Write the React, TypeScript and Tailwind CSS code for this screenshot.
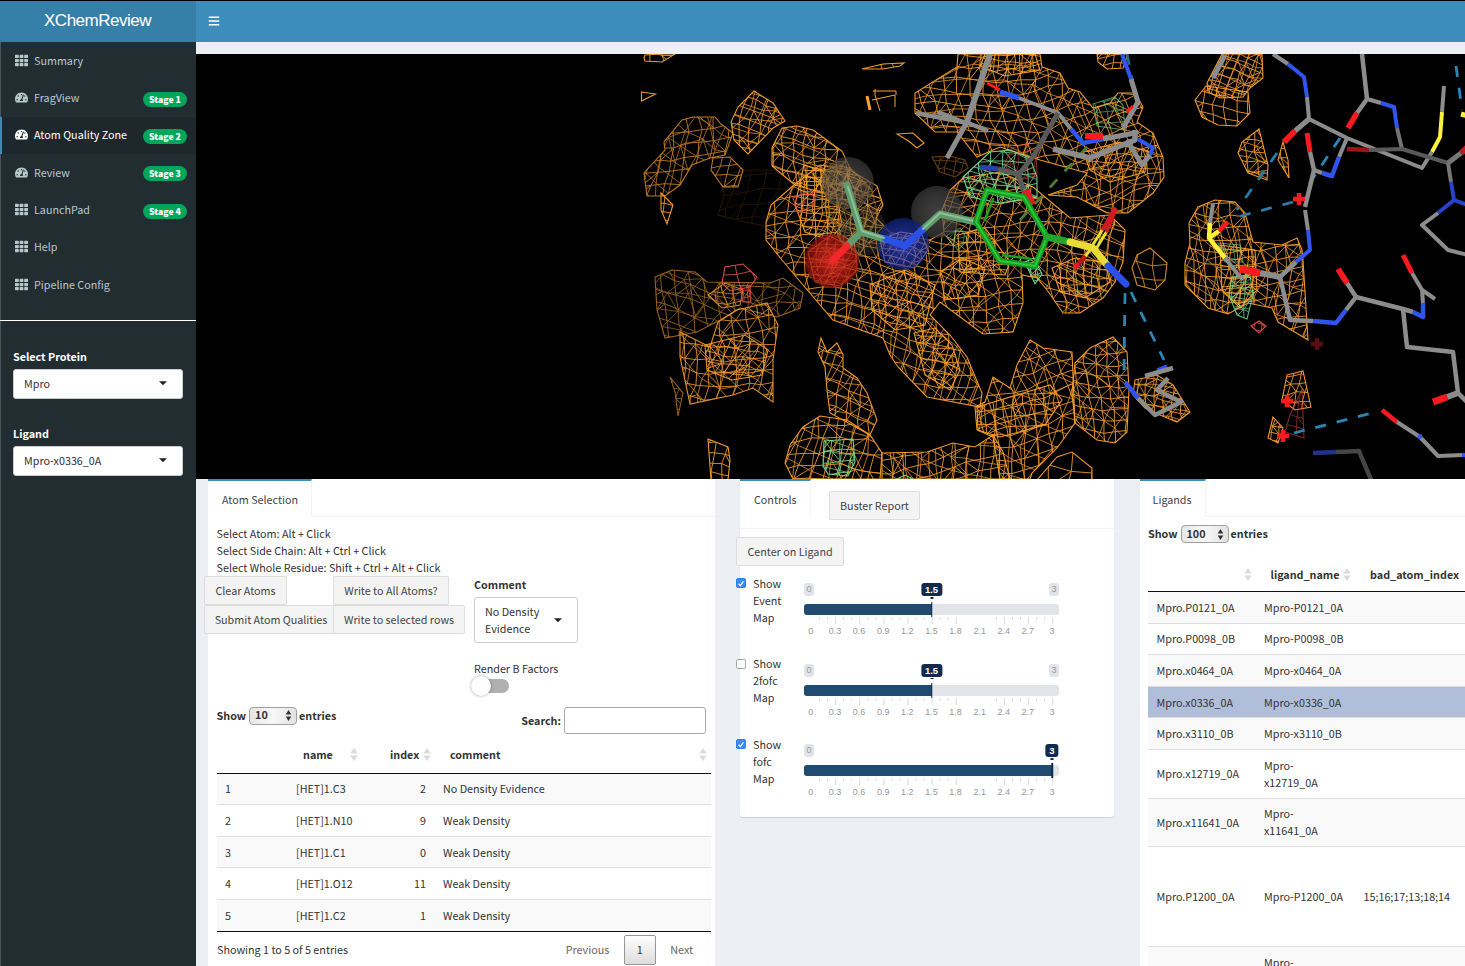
import React from "react";
import { FaBars, FaTachometerAlt, FaTh } from "react-icons/fa";

type Pt = [number, number];

/* ---------- density map ---------- */

function random(seed: number) {
  let s = seed * 2654435761 + 12345;
  return () => {
    s = (s * 1664525 + 1013904223) % 4294967296;
    return s / 4294967296;
  };
}

function netPath(poly: Pt[], step: number, seed: number, angle: number) {
  const rnd = random(seed);
  const xs = poly.map((p) => p[0]);
  const ys = poly.map((p) => p[1]);
  const cx = (Math.min(...xs) + Math.max(...xs)) / 2;
  const cy = (Math.min(...ys) + Math.max(...ys)) / 2;
  const r = Math.hypot(Math.max(...xs) - cx, Math.max(...ys) - cy);
  const n = Math.ceil(r / step) + 2;
  const cos = Math.cos(angle);
  const sin = Math.sin(angle);
  const grid: Pt[][] = [];
  for (let i = -n; i <= n; i++) {
    const row: Pt[] = [];
    for (let j = -n; j <= n; j++) {
      const bend = Math.sin((i * 0.4 + seed) * 0.9) * step * 0.8;
      const bend2 = Math.cos((j * 0.4 + seed) * 0.9) * step * 0.8;
      const u = j * step + bend + (rnd() - 0.5) * step * 0.3;
      const v = i * step + bend2 + (rnd() - 0.5) * step * 0.3;
      row.push([cx + u * cos - v * sin, cy + u * sin + v * cos]);
    }
    grid.push(row);
  }
  let d = "";
  const seg = (a: Pt, b: Pt) => {
    d += `M${a[0].toFixed(1)} ${a[1].toFixed(1)}L${b[0].toFixed(1)} ${b[1].toFixed(1)}`;
  };
  for (let i = 0; i < 2 * n; i++) {
    for (let j = 0; j < 2 * n; j++) {
      seg(grid[i][j], grid[i][j + 1]);
      seg(grid[i][j], grid[i + 1][j]);
      const k = rnd();
      if (k < 0.12) seg(grid[i][j], grid[i + 1][j + 1]);
      else if (k < 0.24) seg(grid[i][j + 1], grid[i + 1][j]);
    }
  }
  return d;
}

function parse(s: string): Pt[] {
  return s.split(" ").map((p) => p.split(",").map(Number) as Pt);
}

interface BlobSpec {
  pts: string;
  step?: number;
  angle?: number;
  color?: string;
  opacity?: number;
  layers?: number;
}

const ORANGE = "#fba12f";
const GREEN = "#78e096";
const RED = "#e0524a";

const blobs: BlobSpec[] = [
  { pts: "720,175 750,170 775,170 795,185 775,228 745,222 718,215 724,195", opacity: 0.13, step: 15, layers: 1 },
  { pts: "932,157 950,156 965,160 968,168 955,177 940,172", opacity: 0.4, step: 8, layers: 1 },
  { pts: "641.5,92 655.5,94 641.5,101", step: 30, layers: 0 },
  { pts: "644,58 645,55 662,54 675,54 662,62 645,61", step: 14, layers: 1 },
  { pts: "862,69 883,64 904,63 900,66 883,69", step: 14, layers: 1 },
  { pts: "897,134 913,133 924,143 917,148 910,142", step: 20, layers: 1 },
  { pts: "682,120 693,117 715,117 721,124 733,133 725,155 710,158 692,165 680,185 665,196 647,196 644,173 665,150 664,142", opacity: 0.75, step: 13, angle: 0.1 },
  { pts: "713,158 730,157 743,170 738,187 723,187 711,170", opacity: 0.75, step: 11, layers: 1 },
  { pts: "661,193 673,205 667,224 661,210", step: 8, layers: 1 },
  { pts: "754,91 773,103 785,121 773,128 748,154 734,140 731,122 738,107", step: 10, angle: 0.15 },
  { pts: "782,128 797,126 813,130 842,151 850,168 848,185 830,195 795,185 772,166 772,148", step: 11, angle: 0.1 },
  { pts: "795,184 820,165 850,170 877,186 883,205 876,218 890,232 905,236 930,240 944,232 942,210 950,190 963,178 1000,172 1033,187 1070,218 1110,215 1125,230 1123,262 1115,282 1103,298 1080,313 1063,313 1047,290 1037,278 1022,275 1023,303 1013,332 983,334 940,302 930,315 950,335 967,357 982,393 980,407 927,397 898,367 890,355 883,338 833,320 803,285 782,260 766,240 766,222 771,205", step: 13, angle: 0.12 },
  { pts: "804,165 822,170 836,192 842,225 830,240 805,232 795,205", step: 7, angle: 0.2, layers: 1 },
  { pts: "870,285 905,270 935,285 925,325 895,330 872,310", step: 9, angle: 0.5, layers: 1 },
  { pts: "914,333 935,328 952,345 960,370 950,390 925,375", step: 9, angle: 0.3, layers: 1 },
  { pts: "940,272 962,258 985,268 978,295 945,300", step: 9, angle: 0.4, layers: 1 },
  { pts: "958,235 985,228 1010,262 1005,275 960,272", step: 9, angle: -0.2, layers: 1 },
  { pts: "1052,268 1075,258 1105,262 1110,282 1085,298 1060,292", step: 8, angle: 0.1, layers: 1 },
  { pts: "958,54 957,67 915,93 915,113 935,132 957,132 977,157 1000,147 1040,160 1087,173 1077,185 1048,195 1077,197 1107,213 1128,213 1153,193 1164,177 1163,157 1153,133 1137,122 1143,107 1135,93 1118,93 1110,103 1093,108 1080,92 1068,88 1060,73 1042,67 1040,54", step: 13, angle: -0.15 },
  { pts: "985,54 1035,54 1040,70 1005,76 980,66", step: 8, angle: 0.3, layers: 1 },
  { pts: "1083,152 1120,142 1148,152 1145,172 1110,182 1090,170", step: 8, angle: 0.3, layers: 1 },
  { pts: "1097,54 1098,62 1107,69 1123,68 1128,54", step: 9, layers: 1 },
  { pts: "1222,54 1207,83 1208,92 1220,98 1243,97 1250,88 1263,78 1262,54", step: 8, angle: 0.2 },
  { pts: "1206,86 1195,100 1202,117 1218,125 1237,126 1250,113 1248,92", step: 11, layers: 1 },
  { pts: "1259,129 1242,142 1238,153 1248,173 1267,180 1268,165", step: 11 },
  { pts: "1283,142 1278,160 1289,178 1288,160", step: 9, layers: 1 },
  { pts: "1215,200 1235,202 1245,213 1253,242 1282,245 1297,238 1302,250 1303,260 1308,340 1278,322 1272,308 1248,303 1228,314 1208,308 1185,285 1185,263 1190,243 1189,223 1198,207", step: 12, angle: 0.08 },
  { pts: "1220,245 1255,250 1257,290 1240,308 1222,290", step: 9, angle: 0.2, layers: 1 },
  { pts: "1287,375 1303,371 1311,407 1295,410 1282,400", step: 9, layers: 1 },
  { pts: "1273,417 1283,428 1278,443 1268,438", step: 7, layers: 1 },
  { pts: "1135,380 1157,375 1173,385 1190,412 1177,422 1160,415 1145,408 1133,395", step: 9 },
  { pts: "1150,248 1167,263 1165,280 1155,290 1137,285 1132,268 1137,255", step: 15, layers: 1, opacity: 0.85 },
  { pts: "1090,348 1113,337 1127,352 1129,390 1127,432 1115,443 1097,440 1075,423 1072,393 1075,363", step: 11, angle: 0.1 },
  { pts: "1030,340 1043,348 1072,352 1075,423 1057,448 1032,473 1030,479 1000,479 993,437 977,430 975,407 985,402 993,377 1010,388 1017,365", step: 13, angle: -0.1 },
  { pts: "882,453 927,452 953,443 975,447 993,435 1003,452 1010,479 882,479", step: 13, angle: -0.1 },
  { pts: "793,479 785,463 790,445 803,427 820,416 847,420 870,435 882,453 880,479", step: 14, angle: 0.1 },
  { pts: "977,407 1050,385 1062,400 1045,425 1000,437 978,430", step: 10, angle: -0.3, layers: 1 },
  { pts: "821,338 827,352 837,343 843,355 843,368 857,378 867,393 877,420 870,435 830,413 827,390 825,367 818,352", step: 12, angle: 0.2 },
  { pts: "655,277 672,270 695,272 707,282 770,283 783,278 803,293 800,308 777,317 740,308 720,320 697,332 665,338 657,310", step: 15, angle: 0.1, opacity: 0.6 },
  { pts: "708,295 725,283 743,290 740,305 722,308", step: 10, layers: 1, opacity: 0.8 },
  { pts: "680,332 710,347 718,322 737,310 767,303 778,325 773,360 773,402 753,388 733,395 690,404 680,357", step: 13, angle: 0.15, opacity: 0.9 },
  { pts: "705,345 745,335 768,350 762,375 732,380 707,370", step: 9, angle: 0.4, layers: 1, opacity: 0.9 },
  { pts: "670,377 683,393 678,416 675,392", step: 10, layers: 1, opacity: 0.6 },
  { pts: "708,439 728,447 730,460 728,480 711,480", step: 10, layers: 1 },
  { pts: "1037,480 1057,457 1072,452 1092,468 1092,480", step: 22, layers: 1 },
  { pts: "963,177 990,152 1010,150 1030,158 1037,177 1037,197 1000,203 970,197", color: GREEN, step: 12 },
  { pts: "1093,104 1115,97 1123,105 1125,130 1097,126", color: GREEN, step: 11, opacity: 0.6, layers: 1 },
  { pts: "1025,262 1034,258 1042,274 1035,284", color: GREEN, step: 6, layers: 1 },
  { pts: "946,236 960,228 968,240 958,250", color: GREEN, step: 8, layers: 1, opacity: 0.5 },
  { pts: "824,441 853,439 855,462 848,476 828,474 823,466", color: GREEN, step: 12 },
  { pts: "895,480 905,475 915,480", color: GREEN, step: 10, layers: 1 },
  { pts: "1232,277 1250,275 1253,295 1247,319 1237,315 1229,295", color: GREEN, step: 11, opacity: 0.8 },
  { pts: "1218,243 1240,245 1243,262 1225,262", color: GREEN, step: 9, opacity: 0.6, layers: 1 },
  { pts: "722,283 725,267 743,264 757,277 750,287 730,291", color: RED, step: 17, layers: 1 },
  { pts: "740,286 750,285 751,302 743,302", color: RED, step: 6, layers: 1, opacity: 0.8 },
  { pts: "1004,165 1012,148 1026,144 1036,152 1037,176 1020,180", color: RED, step: 9, layers: 1, opacity: 0.55 },
  { pts: "793,198 812,190 815,205 798,213", color: RED, step: 9, layers: 1, opacity: 0.8 },
  { pts: "1251,326 1259,321 1266,326 1259,333", color: RED, step: 7, layers: 1 },
  { pts: "1302,389 1304,438 1285,432 1290,415", color: RED, step: 12, layers: 1, opacity: 0.55 },
];

function Blob({ spec, id }: { spec: BlobSpec; id: number }) {
  const { pts, step = 12, angle = 0, color = ORANGE, opacity = 0.95, layers = 2 } = spec;
  const poly = parse(pts);
  return (
    <g stroke={color} strokeWidth={0.9} fill="none" opacity={opacity}>
      <clipPath id={`blob${id}`}>
        <polygon points={pts} />
      </clipPath>
      <g clipPath={`url(#blob${id})`}>
        {layers > 0 && <path d={netPath(poly, step, id + 3, angle)} />}
        {layers > 1 && <path d={netPath(poly, step * 1.25, id + 77, angle + 0.35)} opacity={0.85} />}
      </g>
      <polygon points={pts} strokeWidth={1.1} />
    </g>
  );
}

/* ---------- sticks ---------- */

const C = "#8c8c8c";
const N = "#2f55ee";
const O = "#fb1a20";
const S = "#fbf23a";
const D = "#5a5a5a";

const sticks: [string, string, number][] = [
  ["990,54 967,122", C, 6],
  ["916,113 968,123 988,131", C, 4.5],
  ["938,112 968,124", C, 4.5],
  ["967,122 947,158", C, 5],
  ["987,83 1000,90", O, 3],
  ["1000,92 1019,98", N, 5.5],
  ["1019,98 1058,113 1071,129", C, 4],
  ["1071,129 1083,143 1103,139", N, 4.5],
  ["1058,113 1033,157 1018,175", D, 5],
  ["980,167 998,169", "#2743a8", 5],
  ["998,169 1020,175", D, 5],
  ["1018,172 1023,190", D, 5],
  ["1025,190 1032,205", "#e01c20", 8],
  ["1103,139 1135,133", C, 5],
  ["1085,136 1103,136", O, 6],
  ["1053,149 1090,158 1135,140 1135,130", C, 5.5],
  ["1138,139 1153,148 1150,155", N, 4],
  ["1150,155 1142,165 1127,140", C, 5],
  ["1122,54 1131,79", N, 4],
  ["1131,79 1138,102 1123,128", C, 5],
  ["1127,112 1133,106", O, 3],
  ["1225,55 1213,78", C, 5],
  ["1273,54 1288,64", C, 4],
  ["1288,64 1304,77 1307,97", N, 4],
  ["1307,97 1309,119 1347,138 1422,168 1432,152", C, 4],
  ["1309,119 1295,131", C, 5],
  ["1295,131 1284,142", O, 6],
  ["1432,152 1440,137 1442,112", S, 4],
  ["1442,112 1444,86", C, 4],
  ["1362,54 1367,99 1357,113", C, 4.5],
  ["1357,113 1348,128", O, 5.5],
  ["1367,99 1381,103", C, 4],
  ["1381,103 1394,107 1397,128", N, 4],
  ["1397,128 1402,149", "#747474", 4],
  ["1347,149 1369,150", "#a11218", 4.5],
  ["1369,150 1402,149 1448,163", D, 4],
  ["1448,163 1461,153", "#777", 5],
  ["1461,153 1468,147", "#b91d22", 6],
  ["1448,163 1451,182", "#777", 4],
  ["1451,182 1454,200 1470,206", "#2744c9", 4],
  ["1454,200 1438,213", "#2744c9", 4],
  ["1438,213 1422,225 1448,250 1468,255", C, 4],
  ["1307,133 1310,152", O, 5],
  ["1310,152 1314,170 1322,173", C, 4.5],
  ["1322,173 1332,176 1339,157", N, 4.5],
  ["1339,157 1347,138", C, 4],
  ["1314,170 1305,207", C, 4.5],
  ["1305,210 1308,230", C, 4],
  ["1308,230 1310,250 1296,262", N, 4],
  ["1296,262 1280,277 1290,320 1313,321", C, 4.5],
  ["1260,273 1280,277", C, 6],
  ["1240,269 1260,273", O, 7],
  ["1313,321 1336,323 1346,310", N, 4.5],
  ["1346,310 1356,297 1347,283", C, 4.5],
  ["1347,283 1338,269", O, 6],
  ["1356,297 1403,309 1413,312", C, 4.5],
  ["1413,312 1423,317 1423,303", N, 4.5],
  ["1423,303 1422,290 1435,299", C, 4],
  ["1422,290 1412,273", C, 4],
  ["1412,273 1403,255", O, 5],
  ["1403,309 1407,347 1453,352 1458,393 1468,403", C, 4.5],
  ["1458,393 1447,397", C, 6],
  ["1447,397 1433,402", O, 7],
  ["1382,410 1397,422", O, 4.5],
  ["1397,422 1420,437 1438,456 1463,455", C, 4],
  ["1462,455 1468,455", N, 4],
  ["1418,437 1422,436", N, 4],
  ["1313,453 1336,452", "#22318c", 4.5],
  ["1336,452 1359,451 1372,482", "#454545", 4.5],
  ["1213,204 1210,223", C, 4],
  ["1210,223 1209,238 1225,258", S, 4.5],
  ["1209,238 1219,231", S, 4.5],
  ["1219,231 1228,222", O, 4.5],
  ["1225,258 1236,272 1243,280", C, 4],
  ["1125,382 1138,398", N, 4.5],
  ["1138,398 1155,415 1181,402 1157,390 1168,378", C, 4.5],
  ["1157,370 1167,366", N, 3],
  ["1145,376 1173,368", C, 4.5],
  ["1461,114 1468,116", S, 5],
];

const bonds: [string, string][] = [
  ["1456,66 1462,110", "#2b86b8"],
  ["1277,153 1237,210", "#2b7ba8"],
  ["1293,202 1237,217", "#2b7ba8"],
  ["1340,138 1305,190", "#2b86b8"],
  ["1125,293 1124,370", "#2b86b8"],
  ["1131,292 1164,360", "#2b86b8"],
  ["1294,433 1372,413", "#2b86b8"],
  ["1127,54 1134,88", "#1f6a92"],
  ["1087,147 1020,220", "#4f7a3e"],
];

const crosses: [number, number, string][] = [
  [1299, 199, O],
  [1317, 344, "#5a0f12"],
  [1287, 401, O],
  [1283, 436, O],
];

function Viewer() {
  return (
    <svg className="block h-[425px] w-full shrink-0 bg-black" viewBox="196 54 1269 425" preserveAspectRatio="none">
      <defs>
        <radialGradient id="sphereGrey">
          <stop offset="0" stopColor="#6a6a6a" stopOpacity="0.6" />
          <stop offset="1" stopColor="#383838" stopOpacity="0.7" />
        </radialGradient>
        <radialGradient id="sphereRed">
          <stop offset="0" stopColor="#e62a22" stopOpacity="0.9" />
          <stop offset="1" stopColor="#7a0b09" stopOpacity="0.8" />
        </radialGradient>
        <radialGradient id="sphereBlue">
          <stop offset="0" stopColor="#2b3fc0" stopOpacity="0.85" />
          <stop offset="1" stopColor="#10206e" stopOpacity="0.8" />
        </radialGradient>
      </defs>
      {blobs.map((b, i) => (
        <Blob key={i} spec={b} id={i} />
      ))}
      <path d="M875 89V95L880 111M872 100L895 95V107M873 91L896 91V95" stroke={ORANGE} fill="none" />
      <path d="M867 96L870 110" stroke={ORANGE} strokeWidth={3} />
      {bonds.map(([p, c], i) => (
        <polyline key={i} points={p} stroke={c} strokeWidth={2.8} strokeDasharray="11 11" fill="none" />
      ))}
      {sticks.map(([p, c, w], i) => (
        <polyline key={i} points={p} stroke={c} strokeWidth={w} strokeLinejoin="round" fill="none" />
      ))}
      {crosses.map(([x, y, c], i) => (
        <path key={i} d={`M${x - 6} ${y}h12M${x} ${y - 6}v12`} stroke={c} strokeWidth={4.5} />
      ))}
      <circle cx="848" cy="183" r="26" fill="url(#sphereGrey)" />
      <circle cx="862" cy="231" r="25" fill="url(#sphereGrey)" opacity="0.55" />
      <circle cx="937" cy="212" r="26" fill="url(#sphereGrey)" />
      <circle cx="832" cy="261" r="27" fill="url(#sphereRed)" />
      <circle cx="903" cy="244" r="26" fill="url(#sphereBlue)" />
      <g opacity="0.5">
        <Blob spec={{ pts: "808,252 830,236 856,250 857,270 840,286 815,282", step: 8, angle: 0.3, color: "#f0602a", layers: 1 }} id={90} />
        <Blob spec={{ pts: "880,240 900,232 922,235 928,250 915,268 885,262", step: 7, angle: 0.3, color: "#c99ac0", layers: 1 }} id={91} />
        <Blob spec={{ pts: "825,162 850,168 872,190 878,215 860,255 840,240 822,200", step: 8, angle: 0.3, color: "#c98f3c" }} id={92} />
      </g>
      <g fill="none" strokeLinecap="round" strokeLinejoin="round">
        <path d="M847 185L861 232L847 246" stroke="#5f9c6c" strokeWidth={7} />
        <path d="M847 246L833 260" stroke="#f5262a" strokeWidth={7} />
        <path d="M861 232L884 239" stroke="#5f9c6c" strokeWidth={7} />
        <path d="M922 230L940 214L976 222" stroke="#5f9c6c" strokeWidth={7} />
        <path d="M886 239L905 246L922 230" stroke="#2b50e8" strokeWidth={7} />
        <path d="M848 187L862 231L884 238M923 229L940 213L974 221" stroke="#8fbf98" strokeWidth={2} />
        <path d="M976 222L987 190L1024 197L1047 237L1035 266L1000 261Z" stroke="#149a1e" strokeWidth={6} />
        <path d="M976 222L987 190L1024 197L1047 237L1035 266L1000 261Z" stroke="#2ec63a" strokeWidth={2} />
        <path d="M985 220L993 199M1003 255L1031 259" stroke="#16a020" strokeWidth={2.5} />
        <path d="M1047 237L1070 242" stroke="#1fa62b" strokeWidth={7} />
        <path d="M1070 242L1093 248L1108 266" stroke="#e8dc36" strokeWidth={7} />
        <path d="M1092 246L1103 229M1096 249L1107 231M1090 250L1084 258" stroke="#e8dc36" strokeWidth={3} />
        <path d="M1103 229L1113 211M1107 231L1115 211" stroke="#d41a20" strokeWidth={3.5} />
        <path d="M1084 258L1076 266" stroke="#b81519" strokeWidth={5} />
        <path d="M1108 266L1126 284" stroke="#2b50e8" strokeWidth={7} />
        <circle cx="1114" cy="210" r="3" fill="#e01a20" />
        <circle cx="1076" cy="266" r="3" fill="#e01a20" />
      </g>
    </svg>
  );
}

/* ---------- shared parts ---------- */

function SortIcon() {
  return (
    <svg className="h-[13px] w-[8px] shrink-0" viewBox="0 0 8 13" fill="#dcdcdc">
      <path d="M4 0L7.8 5.6H0.2Z M4 13L0.2 7.4H7.8Z" />
    </svg>
  );
}

function Caret() {
  return (
    <svg className="h-[5px] w-[8px] shrink-0" viewBox="0 0 8 5" fill="#222">
      <path d="M0 0.3H8L4 4.3Z" />
    </svg>
  );
}

function LengthMenu({ value }: { value: string }) {
  return (
    <div className="flex h-[18px] items-center font-bold text-[#333]">
      <span className="pb-px">Show</span>
      <span className="mr-[2px] ml-[3px] flex h-[18px] w-[48px] items-center justify-between rounded-[4px] border border-[#a0a0a0] bg-gradient-to-r from-[#e6e6e6] via-[#f8f8f8] to-[#e2e2e2] pr-[4px] pl-[5px] leading-none">
        {value}
        <svg className="h-[11px] w-[7px]" viewBox="0 0 7 11" fill="#333">
          <path d="M3.5 0L6.3 4.5H0.7Z M3.5 11L0.7 6.5H6.3Z" />
        </svg>
      </span>
      <span className="pb-px">entries</span>
    </div>
  );
}

function Btn({ children, className }: { children: React.ReactNode; className: string }) {
  return (
    <button
      className={`flex h-[29px] items-center justify-center rounded-[2px] border border-[#ddd] bg-[#f4f4f4] whitespace-nowrap text-[#444] ${className}`}
    >
      {children}
    </button>
  );
}

/* ---------- sidebar ---------- */

const menu = [
  { label: "Summary" },
  { label: "FragView", stage: "Stage 1" },
  { label: "Atom Quality Zone", stage: "Stage 2", active: true },
  { label: "Review", stage: "Stage 3" },
  { label: "LaunchPad", stage: "Stage 4", grid: true },
  { label: "Help" },
  { label: "Pipeline Config" },
];

function PickField({ label, value }: { label: string; value: string }) {
  return (
    <div className="h-[77px] pr-[13px] pl-[12px]">
      <div className="h-[21px] font-bold text-white">{label}</div>
      <div className="flex h-[30px] items-center justify-between rounded-[3px] border border-[#ccc] bg-white pr-[15px] pl-[10px] text-[#333]">
        {value}
        <Caret />
      </div>
    </div>
  );
}

function Sidebar() {
  return (
    <aside className="w-[196px] shrink-0 border-l border-[#4a555a] bg-[#222d32]">
      <nav>
        {menu.map((m) => (
          <a
            key={m.label}
            className={`-ml-px flex h-[37.35px] items-center border-l-2 pr-[9px] pl-[12.5px] ${
              m.active ? "border-[#3c8dbc] bg-[#1e282c] text-white" : "border-transparent text-[#b8c7ce]"
            }`}
          >
            <span className="flex items-center gap-[6.5px] pb-px">
              {m.stage && !m.grid ? <FaTachometerAlt className="size-[13px]" /> : <FaTh className="size-[13px]" />}
              <span>{m.label}</span>
            </span>
            {m.stage && (
              <span className="mt-[2px] ml-auto flex h-[15px] w-[44px] items-center justify-center rounded-full bg-[#00a65a] text-[8.7px] font-black text-white">
                {m.stage}
              </span>
            )}
          </a>
        ))}
      </nav>
      <div className="mt-[16.5px] mb-[27px] -ml-px h-px bg-white" />
      <PickField label="Select Protein" value="Mpro" />
      <PickField label="Ligand" value="Mpro-x0336_0A" />
    </aside>
  );
}

/* ---------- atom selection ---------- */

const atoms = [
  ["1", "[HET]1.C3", "2", "No Density Evidence"],
  ["2", "[HET]1.N10", "9", "Weak Density"],
  ["3", "[HET]1.C1", "0", "Weak Density"],
  ["4", "[HET]1.O12", "11", "Weak Density"],
  ["5", "[HET]1.C2", "1", "Weak Density"],
];

function AtomPanel() {
  return (
    <section className="h-[500px] w-[507px] shrink-0 bg-white">
      <div className="flex h-[38px]">
        <div className="w-[104px] border-t-2 border-r border-t-[#3c8dbc] border-r-[#f4f4f4] pt-[10px] pl-[14px] text-[#444]">
          Atom Selection
        </div>
        <div className="flex-1 border-b border-[#f4f4f4]" />
      </div>
      <div className="pt-[8px] pl-[8.6px]">
        <p>Select Atom: Alt + Click</p>
        <p>Select Side Chain: Alt + Ctrl + Click</p>
        <p>Select Whole Residue: Shift + Ctrl + Alt + Click</p>
      </div>
      <div className="-ml-[4px] flex h-[127px]">
        <div className="w-[129px]">
          <Btn className="w-[83px]">Clear Atoms</Btn>
          <Btn className="w-[134px]">Submit Atom Qualities</Btn>
        </div>
        <div className="w-[141px]">
          <Btn className="relative w-[116px]">Write to All Atoms?</Btn>
          <Btn className="relative w-[132px]">Write to selected rows</Btn>
        </div>
        <div>
          <div className="h-[21px] font-bold">Comment</div>
          <div className="flex h-[46px] w-[104px] items-center justify-between rounded-[3px] border border-[#ccc] pr-[15px] pl-[10px]">
            <span>
              No Density
              <br />
              Evidence
            </span>
            <Caret />
          </div>
          <div className="mt-[17px] h-[16px]">Render B Factors</div>
          <div className="-ml-[3.5px] flex h-[20px] w-[38px] items-center">
            <span className="z-10 size-[20px] rounded-full bg-white shadow-[0_0_3px_rgba(0,0,0,0.4)]" />
            <span className="-ml-[10px] h-[14px] w-[28px] rounded-full bg-[#b0b0b0]" />
          </div>
        </div>
      </div>
      <div className="mt-[3.6px] flex h-[34px] items-start justify-between pr-[9px] pl-[8.6px]">
        <LengthMenu value="10" />
        <div className="flex items-center gap-[3px] font-bold">
          Search:
          <span className="h-[27px] w-[142px] rounded-[3px] border border-[#aaa]" />
        </div>
      </div>
      <div className="mr-[4px] ml-[9px]">
        <div className="grid h-[33px] grid-cols-[86px_63px_24px_33px_27px_1fr_auto] items-center border-b border-[#111] pr-[4px] pb-[4px] font-bold">
          <span />
          <span>name</span>
          <span className="-ml-[16px]">
            <SortIcon />
          </span>
          <span>index</span>
          <span>
            <SortIcon />
          </span>
          <span>comment</span>
          <SortIcon />
        </div>
        {atoms.map((r, i) => (
          <div
            key={r[0]}
            className={`grid h-[31.6px] grid-cols-[79px_70px_60px_1fr] items-center border-b ${
              i === 4 ? "border-[#111]" : "border-[#ddd]"
            } ${i % 2 === 0 ? "bg-[#f9f9f9]" : "bg-white"}`}
          >
            <span className="pl-[8px]">{r[0]}</span>
            <span>{r[1]}</span>
            <span className="text-right">{r[2]}</span>
            <span className="pl-[17px]">{r[3]}</span>
          </div>
        ))}
        <div className="flex h-[36px] items-center">
          <span className="flex-1">Showing 1 to 5 of 5 entries</span>
          <span className="text-[#666]">Previous</span>
          <span className="mx-[14.5px] flex h-[30px] w-[32px] items-center justify-center rounded-[2px] border border-[#979797] bg-gradient-to-b from-white to-[#dcdcdc]">
            1
          </span>
          <span className="pr-[18px] text-[#666]">Next</span>
        </div>
      </div>
    </section>
  );
}

/* ---------- controls ---------- */

const tickLabels = ["0", "0.3", "0.6", "0.9", "1.2", "1.5", "1.8", "2.1", "2.4", "2.7", "3"];
const ticks = Array.from({ length: 30 }, (_, i) => i + 1).filter((t) => t < 19 || t > 22);

function Slider({ value }: { value: number }) {
  const pos = 7 + (value / 3) * 241;
  return (
    <div className="relative w-[255px] font-['Liberation_Sans',sans-serif] text-[9px] leading-[13px] text-[#999]">
      <div className="flex h-[13px] justify-between">
        <span className="w-[10px] rounded-[3px] bg-[#e1e4e9] text-center">0</span>
        {value < 3 && <span className="w-[10px] rounded-[3px] bg-[#e1e4e9] text-center">3</span>}
      </div>
      <div className="mt-[8px] h-[11px] overflow-hidden rounded-[3px] bg-[#e1e4e9]">
        <div className="h-full bg-[#204a70]" style={{ width: pos }} />
      </div>
      <svg className="mt-[2px] h-[7px] w-[255px]" viewBox="0 0 255 7">
        {ticks.map((t) => (
          <rect key={t} x={7 + t * 8.04} y="0" width="1" height={t % 3 === 0 ? 7 : 3} fill="#d8dbe0" />
        ))}
      </svg>
      <div className="mt-px -ml-[5.2px] flex w-[266px]">
        {tickLabels.map((l) => (
          <span key={l} className="w-[24.12px] shrink-0 text-center">
            {l}
          </span>
        ))}
      </div>
      <span
        className="absolute top-0 flex -translate-x-1/2 items-center rounded-[3px] bg-[#132a4d] px-[4px] text-[9.5px] font-bold text-white"
        style={{ left: pos }}
      >
        {value}
      </span>
      <span className="absolute top-[14px] h-[1.5px] w-[3px] -translate-x-1/2 bg-[#132a4d]" style={{ left: pos }} />
      <span className="absolute top-[19px] h-[15px] w-[1.5px] -translate-x-1/2 bg-[#132a4d]" style={{ left: pos }} />
    </div>
  );
}

function ControlRow({ name, checked, value }: { name: string; checked: boolean; value: number }) {
  return (
    <div className="-ml-[4px] flex h-[80.5px] items-start">
      <span
        className={`mt-[1px] flex size-[10px] items-center justify-center rounded-[2px] border ${
          checked ? "border-[#2f7fee] bg-[#3b8af7]" : "border-[#aaa] bg-white"
        }`}
      >
        {checked && (
          <svg viewBox="0 0 10 10" className="size-[9px]" fill="none" stroke="#fff" strokeWidth="1.6">
            <path d="M2 5.3L4.2 7.6L8 2.3" />
          </svg>
        )}
      </span>
      <div className="-mt-[2.2px] w-[58px] pl-[7px]">
        Show
        <br />
        {name}
        <br />
        Map
      </div>
      <div className="mt-[6.4px]">
        <Slider value={value} />
      </div>
    </div>
  );
}

function ControlsPanel() {
  return (
    <section className="mr-[26px] ml-[25px] h-[338px] w-[374px] shrink-0 rounded-b-[3px] bg-white shadow-[0_1px_1px_rgba(0,0,0,0.12)]">
      <div className="flex h-[50px] border-b border-[#f4f4f4]">
        <div className="h-[38px] w-[71px] border-t-2 border-r border-t-[#3c8dbc] border-r-[#f4f4f4] pt-[10px] pl-[14px] text-[#444]">
          Controls
        </div>
        <Btn className="mt-[12px] ml-[18px] w-[91px]">Buster Report</Btn>
      </div>
      <div className="mt-[8px] mb-[11px] -ml-[4px]">
        <Btn className="w-[108px]">Center on Ligand</Btn>
      </div>
      <ControlRow name="Event" checked value={1.5} />
      <ControlRow name="2fofc" checked={false} value={1.5} />
      <ControlRow name="fofc" checked value={3} />
    </section>
  );
}

/* ---------- ligands ---------- */

const ligands = [
  { id: "Mpro.P0121_0A", name: ["Mpro-P0121_0A"], bad: "", h: "h-[31.6px]", bg: "bg-[#f9f9f9]" },
  { id: "Mpro.P0098_0B", name: ["Mpro-P0098_0B"], bad: "", h: "h-[31.6px]", bg: "bg-white" },
  { id: "Mpro.x0464_0A", name: ["Mpro-x0464_0A"], bad: "", h: "h-[31.6px]", bg: "bg-[#f9f9f9]" },
  { id: "Mpro.x0336_0A", name: ["Mpro-x0336_0A"], bad: "", h: "h-[31.6px]", bg: "bg-[#b0bed9]" },
  { id: "Mpro.x3110_0B", name: ["Mpro-x3110_0B"], bad: "", h: "h-[31.6px]", bg: "bg-[#f9f9f9]" },
  { id: "Mpro.x12719_0A", name: ["Mpro-", "x12719_0A"], bad: "", h: "h-[48.6px]", bg: "bg-white" },
  { id: "Mpro.x11641_0A", name: ["Mpro-", "x11641_0A"], bad: "", h: "h-[48.6px]", bg: "bg-[#f9f9f9]" },
  { id: "Mpro.P1200_0A", name: ["Mpro-P1200_0A"], bad: "15;16;17;13;18;14", h: "h-[99.6px]", bg: "bg-white" },
  { id: "", name: ["Mpro-"], bad: "", h: "h-[33px]", bg: "bg-[#f9f9f9]" },
];

function LigandPanel() {
  return (
    <section className="h-[500px] flex-1 overflow-hidden bg-white">
      <div className="flex h-[38px]">
        <div className="w-[66px] border-t-2 border-r border-t-[#3c8dbc] border-r-[#f4f4f4] pt-[10px] pl-[12.6px] text-[#444]">
          Ligands
        </div>
        <div className="flex-1 border-b border-[#f4f4f4]" />
      </div>
      <div className="pt-[8px] pl-[8px]">
        <LengthMenu value="100" />
        <div className="mt-[15px] grid h-[34px] grid-cols-[96px_26.5px_72.5px_27px_1fr] items-center border-b border-[#111] font-bold">
          <span />
          <SortIcon />
          <span>ligand_name</span>
          <SortIcon />
          <span>bad_atom_index</span>
        </div>
        {ligands.map((l, i) => (
          <div key={i} className={`grid grid-cols-[116px_99.5px_1fr] items-center border-b border-[#ddd] ${l.h} ${l.bg}`}>
            <span className="pl-[8.5px]">{l.id}</span>
            <span>
              {l.name.map((part) => (
                <span key={part} className="block">
                  {part}
                </span>
              ))}
            </span>
            <span>{l.bad}</span>
          </div>
        ))}
      </div>
    </section>
  );
}

export default function App() {
  return (
    <div className="flex h-[966px] w-[1465px] flex-col overflow-hidden border-t border-black bg-[#ecf0f5] font-['Noto_Sans_CJK_SC',sans-serif] text-[10.76px] leading-[17px] text-[#333]">
      <header className="flex h-[41px] shrink-0 bg-[#3c8dbc] text-white">
        <div className="flex w-[196px] items-center justify-center bg-[#367fa9] pb-[3px] pr-[1px] font-['Liberation_Sans',sans-serif] text-[17px] tracking-[-0.5px]">
          XChemReview
        </div>
        <div className="flex items-center pb-[2px] pl-[11.5px]">
          <FaBars className="size-[12px]" />
        </div>
      </header>
      <div className="flex min-h-0 flex-1">
        <Sidebar />
        <main className="flex min-w-0 flex-1 flex-col overflow-hidden pt-[12px]">
          <Viewer />
          <div className="flex min-h-0 flex-1 items-start overflow-hidden pl-[12px]">
            <AtomPanel />
            <ControlsPanel />
            <LigandPanel />
          </div>
        </main>
      </div>
    </div>
  );
}
